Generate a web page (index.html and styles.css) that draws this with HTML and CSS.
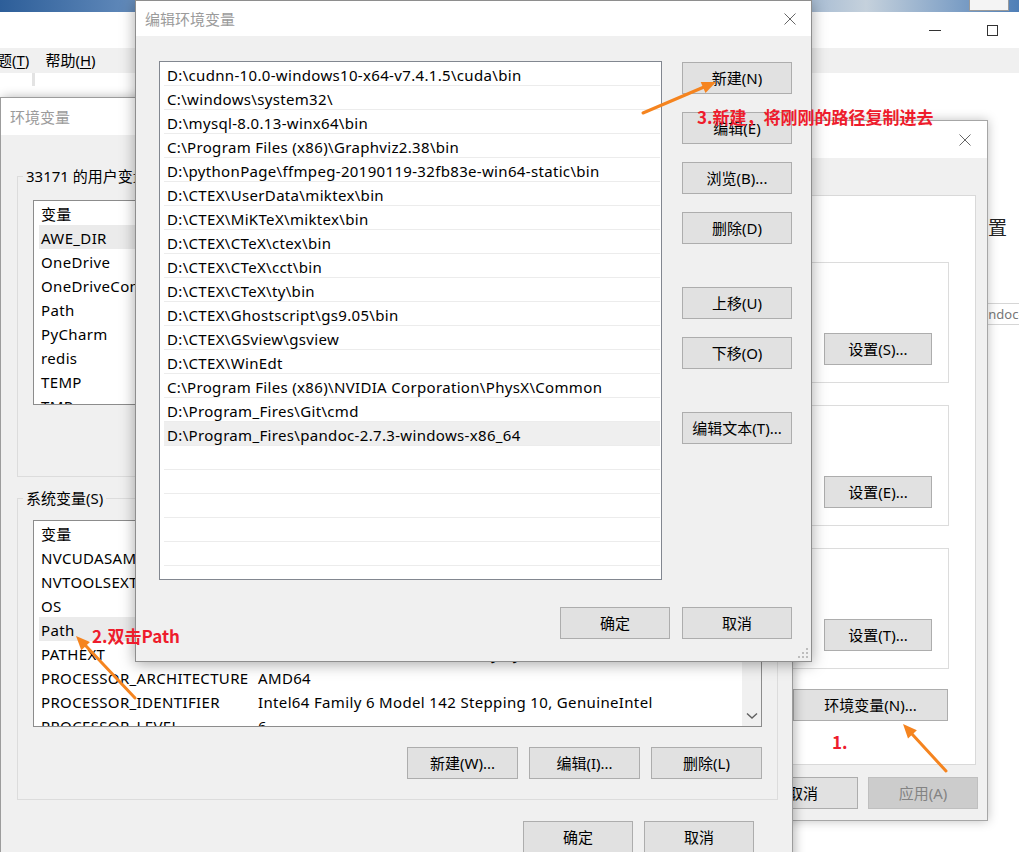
FILE: index.html
```html
<!DOCTYPE html>
<html lang="zh-CN">
<head>
<meta charset="utf-8">
<title>编辑环境变量</title>
<link rel="stylesheet" href="styles.css">
</head>
<body>
<div class="desktop">
  <div class="sky"><div class="sky-box"></div></div>

  <!-- background application window -->
  <div class="win app">
    <div class="app-title">
      <span class="ctl-min"></span>
      <span class="ctl-max"></span>
    </div>
    <div class="app-menu">
      <span class="menu-item">题(<u>T</u>)</span>
      <span class="menu-item">帮助(<u>H</u>)</span>
    </div>
    <div class="app-body">
      <div class="app-tool"></div>
      <div class="app-side">
        <div class="app-heading">设置</div>
        <div class="app-field">pandoc-2.7.3</div>
      </div>
    </div>
  </div>

  <!-- 系统属性 -->
  <div class="win sysprop">
    <div class="titlebar">
      <span class="title">系统属性</span>
      <svg class="close" width="12" height="12" viewBox="0 0 12 12"><path d="M0.5 0.5 L11.5 11.5 M11.5 0.5 L0.5 11.5" stroke="#666" stroke-width="1" fill="none"/></svg>
    </div>
    <div class="sp-body">
      <div class="sp-panel">
        <div class="sp-group"><button class="btn">设置(S)...</button></div>
        <div class="sp-group"><button class="btn">设置(E)...</button></div>
        <div class="sp-group"><button class="btn">设置(T)...</button></div>
        <div class="sp-env"><button class="btn btn-env">环境变量(N)...</button></div>
      </div>
      <div class="sp-foot">
        <button class="btn">确定</button>
        <button class="btn">取消</button>
        <button class="btn btn-disabled">应用(A)</button>
      </div>
    </div>
  </div>

  <!-- 环境变量 -->
  <div class="win envwin">
    <div class="titlebar env-title">
      <span class="title">环境变量</span>
    </div>
    <div class="env-body">
      <fieldset class="group group-user">
        <legend>33171 的用户变量(U)</legend>
        <div class="listview user-list">
          <div class="lv-rows">
            <div class="lv-row"><span>变量</span><span>值</span></div>
            <div class="lv-row sel"><span>AWE_DIR</span><span>D:\Awesomium SDK\1.6.6\</span></div>
            <div class="lv-row"><span>OneDrive</span><span>C:\Users\33171\OneDrive</span></div>
            <div class="lv-row"><span>OneDriveConsumer</span><span>C:\Users\33171\OneDrive</span></div>
            <div class="lv-row"><span>Path</span><span>C:\Users\33171\AppData\Local\Microsoft\WindowsApps;</span></div>
            <div class="lv-row"><span>PyCharm</span><span>D:\PyCharm\bin;</span></div>
            <div class="lv-row"><span>redis</span><span>D:\redis</span></div>
            <div class="lv-row"><span>TEMP</span><span>C:\Users\33171\AppData\Local\Temp</span></div>
            <div class="lv-row"><span>TMP</span><span>C:\Users\33171\AppData\Local\Temp</span></div>
          </div>
        </div>
        <div class="btn-row">
          <button class="btn btn-w">新建(N)...</button>
          <button class="btn btn-w">编辑(E)...</button>
          <button class="btn btn-w">删除(D)</button>
        </div>
      </fieldset>

      <fieldset class="group group-sys">
        <legend>系统变量(S)</legend>
        <div class="listview sys-list">
          <div class="lv-rows">
            <div class="lv-row"><span>变量</span><span>值</span></div>
            <div class="lv-row"><span>NVCUDASAMPLES_ROOT</span><span>C:\ProgramData\NVIDIA Corporation\CUDA Samples\v10.0</span></div>
            <div class="lv-row"><span>NVTOOLSEXT_PATH</span><span>C:\Program Files\NVIDIA Corporation\NvToolsExt\</span></div>
            <div class="lv-row"><span>OS</span><span>Windows_NT</span></div>
            <div class="lv-row sel"><span>Path</span><span>C:\Program Files (x86)\Common Files\Oracle\Java\javapath</span></div>
            <div class="lv-row"><span>PATHEXT</span><span>.COM;.EXE;.BAT;.CMD;.VBS;.VBE;.JS;.JSE;.WSF;.WSH;.MSC</span></div>
            <div class="lv-row"><span>PROCESSOR_ARCHITECTURE</span><span>AMD64</span></div>
            <div class="lv-row"><span>PROCESSOR_IDENTIFIER</span><span>Intel64 Family 6 Model 142 Stepping 10, GenuineIntel</span></div>
            <div class="lv-row"><span>PROCESSOR_LEVEL</span><span>6</span></div>
          </div>
          <div class="vscroll">
            <svg width="12" height="8" viewBox="0 0 12 8"><path d="M1 1.5 L6 6 L11 1.5" stroke="#606060" stroke-width="1.4" fill="none"/></svg>
          </div>
        </div>
        <div class="btn-row">
          <button class="btn btn-w">新建(W)...</button>
          <button class="btn btn-w">编辑(I)...</button>
          <button class="btn btn-w">删除(L)</button>
        </div>
      </fieldset>

      <div class="env-foot">
        <button class="btn">确定</button>
        <button class="btn">取消</button>
      </div>
    </div>
  </div>

  <!-- 编辑环境变量 -->
  <div class="win editdlg">
    <div class="titlebar">
      <span class="title">编辑环境变量</span>
      <svg class="close" width="12" height="12" viewBox="0 0 12 12"><path d="M0.5 0.5 L11.5 11.5 M11.5 0.5 L0.5 11.5" stroke="#666" stroke-width="1" fill="none"/></svg>
    </div>
    <div class="ed-body">
      <div class="ed-list">
        <div class="ed-row">D:\cudnn-10.0-windows10-x64-v7.4.1.5\cuda\bin</div>
        <div class="ed-row">C:\windows\system32\</div>
        <div class="ed-row">D:\mysql-8.0.13-winx64\bin</div>
        <div class="ed-row">C:\Program Files (x86)\Graphviz2.38\bin</div>
        <div class="ed-row">D:\pythonPage\ffmpeg-20190119-32fb83e-win64-static\bin</div>
        <div class="ed-row">D:\CTEX\UserData\miktex\bin</div>
        <div class="ed-row">D:\CTEX\MiKTeX\miktex\bin</div>
        <div class="ed-row">D:\CTEX\CTeX\ctex\bin</div>
        <div class="ed-row">D:\CTEX\CTeX\cct\bin</div>
        <div class="ed-row">D:\CTEX\CTeX\ty\bin</div>
        <div class="ed-row">D:\CTEX\Ghostscript\gs9.05\bin</div>
        <div class="ed-row">D:\CTEX\GSview\gsview</div>
        <div class="ed-row">D:\CTEX\WinEdt</div>
        <div class="ed-row">C:\Program Files (x86)\NVIDIA Corporation\PhysX\Common</div>
        <div class="ed-row">D:\Program_Fires\Git\cmd</div>
        <div class="ed-row sel">D:\Program_Fires\pandoc-2.7.3-windows-x86_64</div>
        <div class="ed-row"></div>
        <div class="ed-row"></div>
        <div class="ed-row"></div>
        <div class="ed-row"></div>
        <div class="ed-row"></div>
        <div class="ed-row"></div>
      </div>
      <div class="ed-btns">
        <button class="btn">新建(N)</button>
        <button class="btn">编辑(E)</button>
        <button class="btn">浏览(B)...</button>
        <button class="btn">删除(D)</button>
        <button class="btn sep">上移(U)</button>
        <button class="btn">下移(O)</button>
        <button class="btn sep">编辑文本(T)...</button>
      </div>
      <div class="ed-foot">
        <button class="btn">确定</button>
        <button class="btn">取消</button>
      </div>
    </div>
    <svg class="grip" width="10" height="10" viewBox="0 0 10 10">
      <rect x="8" y="0" width="2" height="2" fill="#bdbdbd"/>
      <rect x="4" y="4" width="2" height="2" fill="#bdbdbd"/>
      <rect x="8" y="4" width="2" height="2" fill="#bdbdbd"/>
      <rect x="0" y="8" width="2" height="2" fill="#bdbdbd"/>
      <rect x="4" y="8" width="2" height="2" fill="#bdbdbd"/>
      <rect x="8" y="8" width="2" height="2" fill="#bdbdbd"/>
    </svg>
  </div>

  <!-- annotations -->
  <svg class="arrows" width="1019" height="852" viewBox="0 0 1019 852">
    <g stroke="#f5841f" stroke-width="3" stroke-linecap="round" fill="none">
      <line x1="643" y1="113" x2="704" y2="87"/>
      <line x1="135" y1="698" x2="86" y2="646"/>
      <line x1="946" y1="771" x2="912" y2="734"/>
    </g>
    <g fill="#f5841f">
      <polygon points="716,82 705.5,93 700.7,82"/>
      <polygon points="76,636 90,642 81.3,650.3"/>
      <polygon points="903,724 916.9,730.3 908,738.4"/>
    </g>
  </svg>
  <div class="note note-3">3.新建，将刚刚的路径复制进去</div>
  <div class="note note-2">2.双击Path</div>
  <div class="note note-1">1.</div>
</div>
</body>
</html>
```

FILE: styles.css
```css
* { box-sizing: border-box; }

html, body {
  margin: 0;
  padding: 0;
}

body {
  width: 1019px;
  height: 852px;
  overflow: hidden;
  background: #fff;
  font-family: "Noto Sans", "Noto Sans CJK SC", sans-serif;
  font-size: 15px;
  color: #000;
}

.desktop {
  position: relative;
  width: 1019px;
  height: 852px;
  overflow: hidden;
}

/* desktop wallpaper strip */
.sky {
  position: absolute;
  left: 0;
  top: 0;
  width: 1019px;
  height: 12px;
  background: linear-gradient(90deg, #2d5e99 0%, #5e87b8 12%, #a9bcd0 22%, #6d93bf 40%, #3f6ea8 60%, #8eaacb 75%, #c5d1dc 85%, #4f7fb7 100%);
}

.sky-box {
  margin-left: 969px;
  width: 40px;
  height: 11px;
  background: #f4f4f4;
  border: 1px solid #9a9a9a;
  border-top: none;
}

.win { position: absolute; }

/* ---------- background app ---------- */
.app {
  left: 0;
  top: 12px;
  width: 1019px;
  height: 840px;
  background: #fff;
  display: flex;
  flex-direction: column;
}

.app-title {
  height: 36px;
  display: flex;
  align-items: center;
  justify-content: flex-end;
  padding-right: 21px;
}

.ctl-min {
  width: 12px;
  height: 1px;
  background: #333;
  margin-right: 46px;
}

.ctl-max {
  width: 11px;
  height: 11px;
  border: 1px solid #333;
}

.app-menu {
  height: 25px;
  background: #f0f0f0;
  display: flex;
  align-items: center;
  gap: 16px;
  margin-left: -3px;
  line-height: 25px;
}

.menu-item u { text-underline-offset: 2px; }

.app-body {
  flex: 1;
  display: flex;
}

.app-tool {
  margin-left: 32px;
  width: 3px;
  height: 13px;
  background: #e3e3e3;
}

.app-side {
  margin-left: auto;
  width: 50px;
  overflow: hidden;
  padding-top: 144px;
}

.app-heading {
  font-size: 19px;
  line-height: 22px;
  color: #222;
  white-space: nowrap;
}

.app-field {
  margin-top: 64px;
  height: 22px;
  border: 1px solid #d6d6d6;
  border-right: none;
  padding-left: 3px;
  font-size: 13px;
  line-height: 20px;
  color: #777;
  white-space: nowrap;
}

/* ---------- common ---------- */
.titlebar {
  display: flex;
  align-items: center;
  background: #fff;
}

.title {
  color: #9b9b9b;
  font-size: 15px;
  white-space: nowrap;
}

.close { margin-left: auto; }

.btn {
  font-family: inherit;
  font-size: 15px;
  width: 110px;
  height: 32px;
  flex-shrink: 0;
  padding: 0;
  margin: 0;
  background: #e1e1e1;
  border: 1px solid #adadad;
  color: #000;
  line-height: 30px;
  text-align: center;
  white-space: nowrap;
}

/* ---------- 系统属性 ---------- */
.sysprop {
  left: 700px;
  top: 120px;
  width: 288px;
  height: 701px;
  background: #f0f0f0;
  border: 1px solid #a6a6a6;
  box-shadow: 0 0 10px rgba(0, 0, 0, 0.25);
  display: flex;
  flex-direction: column;
}

.sysprop .titlebar {
  height: 37px;
  padding-left: 10px;
}

.sysprop .close { margin-right: 16px; }

.sp-body {
  flex: 1;
  padding: 37px 11px 11px 11px;
  display: flex;
  flex-direction: column;
}

.sp-panel {
  height: 570px;
  background: #fff;
  border: 1px solid #d9d9d9;
  padding: 66px 26px 0 12px;
  display: flex;
  flex-direction: column;
  gap: 22px;
}

.sp-group {
  height: 121px;
  border: 1px solid #dcdcdc;
  display: flex;
  justify-content: flex-end;
  align-items: flex-start;
  padding: 70px 16px 0 0;
}

.sp-group .btn { width: 108px; }

.sp-env {
  display: flex;
  justify-content: flex-end;
  margin-top: -2px;
  padding-right: 1px;
}

.btn-env { width: 155px; }

.sp-foot {
  margin-top: 12px;
  margin-right: -2px;
  display: flex;
  justify-content: flex-end;
  gap: 10px;
}

.sp-foot .btn { width: 110px; }

.btn-disabled {
  background: #cccccc;
  border-color: #bfbfbf;
  color: #838383;
}

/* ---------- 环境变量 ---------- */
.envwin {
  left: 0;
  top: 97px;
  width: 793px;
  height: 780px;
  background: #f0f0f0;
  border: 1px solid #9c9c9c;
  box-shadow: 2px 0 10px rgba(0, 0, 0, 0.28);
  display: flex;
  flex-direction: column;
}

.env-title {
  height: 37px;
  padding-left: 9px;
}

.env-body {
  padding: 32px 14px 0 16px;
  display: flex;
  flex-direction: column;
}

.group {
  margin: 0;
  border: 1px solid #dcdcdc;
  padding: 15px 15px 19px 15px;
  min-width: 0;
}

.group legend {
  padding: 0 3px;
  margin-left: -10px;
  line-height: 18px;
  font-size: 15px;
  white-space: nowrap;
}

.group-sys {
  margin-top: 12px;
  padding-top: 13px;
  padding-bottom: 20px;
}

.listview {
  background: #fff;
  border: 1px solid #8c8c8c;
  display: flex;
  overflow: hidden;
}

.user-list { height: 205px; }
.sys-list { height: 207px; }

.lv-rows {
  flex: 1;
  min-width: 0;
  overflow: hidden;
}

.lv-row {
  height: 24px;
  line-height: 27px;
  margin-left: 5px;
  padding-left: 2px;
  display: grid;
  grid-template-columns: 217px 1fr;
  white-space: nowrap;
  overflow: hidden;
  letter-spacing: 0.35px;
}

.lv-row.sel { background: #ebebeb; }

.vscroll {
  width: 19px;
  background: #f0f0f0;
  display: flex;
  flex-direction: column;
  justify-content: flex-end;
  align-items: center;
  padding-bottom: 6px;
}

.btn-row {
  margin-top: 20px;
  display: flex;
  justify-content: flex-end;
  gap: 11px;
}

.btn-w { width: 111px; }

.env-foot {
  margin-top: 21px;
  margin-right: 24px;
  display: flex;
  justify-content: flex-end;
  gap: 11px;
}

/* ---------- 编辑环境变量 ---------- */
.editdlg {
  left: 135px;
  top: 0;
  width: 677px;
  height: 662px;
  background: #f0f0f0;
  border: 1px solid #8e8e8e;
  box-shadow: 0 2px 14px rgba(0, 0, 0, 0.35);
  display: flex;
  flex-direction: column;
}

.editdlg .titlebar {
  height: 35px;
  padding-left: 9px;
}

.editdlg .close { margin-right: 15px; }

.ed-body {
  padding: 25px 19px 22px 23px;
  display: grid;
  grid-template-columns: 503px 110px;
  grid-template-rows: 519px 32px;
  column-gap: 20px;
  row-gap: 27px;
}

.ed-list {
  background: #fff;
  border: 1px solid #828790;
  overflow: hidden;
}

.ed-row {
  height: 24px;
  line-height: 26px;
  border-bottom: 1px solid #ececec;
  margin: 0 1px 0 4px;
  padding-left: 3px;
  white-space: nowrap;
  overflow: hidden;
  letter-spacing: 0.33px;
}

.ed-row.sel { background: #efefef; }

.ed-btns {
  display: flex;
  flex-direction: column;
  gap: 18px;
  padding-top: 1px;
}

.ed-btns .sep { margin-top: 25px; }

.ed-foot {
  grid-column: 1 / 3;
  display: flex;
  justify-content: flex-end;
  gap: 12px;
}

.grip {
  position: absolute;
  right: 3px;
  bottom: 3px;
}

/* ---------- annotations ---------- */
.arrows {
  position: absolute;
  left: 0;
  top: 0;
  pointer-events: none;
}

.note {
  position: absolute;
  color: #ee1c2c;
  font-family: "Noto Sans CJK SC", "Noto Sans", sans-serif;
  font-weight: 700;
  font-size: 17px;
  line-height: 20px;
  white-space: nowrap;
}

.note-3 { left: 697px; top: 107px; }
.note-2 { left: 92px; top: 626px; }
.note-1 { left: 832px; top: 732px; }
```
